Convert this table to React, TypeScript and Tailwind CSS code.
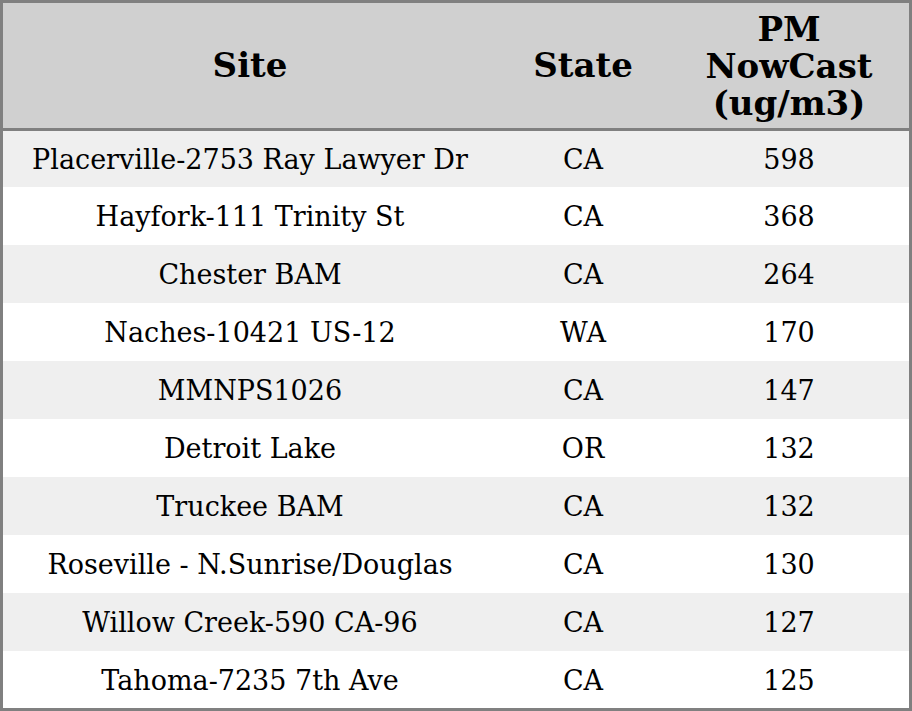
import React from "react";

const rows: [string, string, string][] = [
  ["Placerville-2753 Ray Lawyer Dr", "CA", "598"],
  ["Hayfork-111 Trinity St", "CA", "368"],
  ["Chester BAM", "CA", "264"],
  ["Naches-10421 US-12", "WA", "170"],
  ["MMNPS1026", "CA", "147"],
  ["Detroit Lake", "OR", "132"],
  ["Truckee BAM", "CA", "132"],
  ["Roseville - N.Sunrise/Douglas", "CA", "130"],
  ["Willow Creek-590 CA-96", "CA", "127"],
  ["Tahoma-7235 7th Ave", "CA", "125"],
];

const heights = ["h-[56px]", "h-[58px]", "h-[58px]", "h-[58px]", "h-[58px]", "h-[58px]", "h-[58px]", "h-[58px]", "h-[58px]", "h-[57px]"];

export default function App() {
  return (
    <div
      className="w-[912px] h-[711px] border-[3px] border-[#808080] bg-white text-black flex flex-col"
      style={{ fontFamily: '"DejaVu Serif", serif' }}
    >
      <div className="h-[125px] bg-[#d0d0d0] flex items-center font-bold text-[34px] leading-[37px] shrink-0">
        <div className="w-[494px] text-center">Site</div>
        <div className="w-[172px] text-center">State</div>
        <div className="w-[240px] text-center pt-[2px]">
          PM
          <br />
          NowCast
          <br />
          (ug/m3)
        </div>
      </div>
      <div className="h-[3px] bg-[#808080] shrink-0" />
      {rows.map((r, i) => (
        <div
          key={i}
          className={`${heights[i]} shrink-0 flex items-center pt-[3px] text-[27px] ${i % 2 === 0 ? "bg-[#efefef]" : "bg-white"}`}
        >
          <div className="w-[494px] text-center">{r[0]}</div>
          <div className="w-[172px] text-center">{r[1]}</div>
          <div className="w-[240px] text-center">{r[2]}</div>
        </div>
      ))}
    </div>
  );
}
